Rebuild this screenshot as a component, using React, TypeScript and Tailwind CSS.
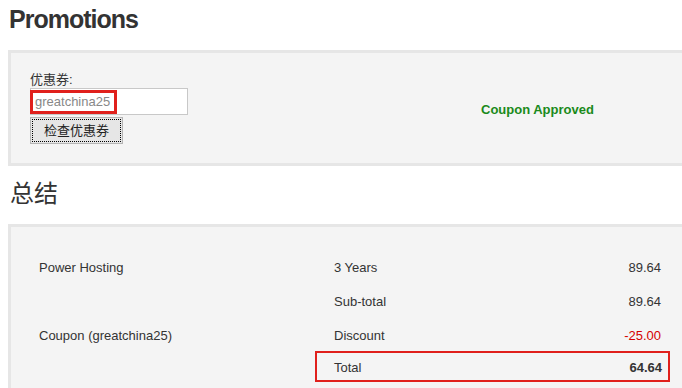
export default function App() {
  const rows = [
    { item: "Power Hosting", label: "3 Years", value: "89.64" },
    { item: "", label: "Sub-total", value: "89.64" },
    { item: "Coupon (greatchina25)", label: "Discount", value: "-25.00", red: true },
  ];

  return (
    <div className="w-[682px] h-[388px] overflow-hidden bg-white pl-2 text-[#333]" style={{ fontFamily: '"Liberation Sans", "Noto Sans CJK SC", sans-serif' }}>
      {/* Promotions */}
      <h1 className="pt-[3px] pl-[1px] text-[25px] font-bold leading-[32px] tracking-[-1px] text-[#333]">Promotions</h1>

      <div className="mt-[15px] w-[700px] h-[116px] border-[3px] border-[#e6e6e6] bg-[#f4f4f4] flex">
        <div className="w-[451px] pl-[19px] pt-[20px] shrink-0">
          <label className="block text-[13px] leading-[14px] text-[#333]">优惠券:</label>
          <div className="relative mt-[1px] w-[158px] h-[27px] bg-white border border-[#c8c8c8]">
            <span className="absolute left-[-1px] top-[1px] h-[24px] w-[87px] border-[3px] border-[#e0201c] pl-[2px] text-[13px] leading-[18px] text-[#888]">greatchina25</span>
          </div>
          <button className="mt-[2px] w-[93px] h-[27px] bg-[#e6e6e6] border border-[#b5b5b5] outline outline-1 outline-dotted outline-black -outline-offset-[3px] text-[13px] text-[#222]">检查优惠券</button>
        </div>
        <div className="pl-[19px] pt-[47px] text-[13px] font-bold text-[#1a8a1a]">Coupon Approved</div>
      </div>

      {/* Summary */}
      <h2 className="mt-[11px] pl-[2px] text-[24px] leading-[30px] text-[#333]" style={{ fontFamily: '"Noto Sans CJK SC", sans-serif' }}>总结</h2>

      <div className="mt-[17px] w-[700px] h-[200px] border-t-[3px] border-l-[3px] border-[#e6e6e6] bg-[#f4f4f4] pl-[28px] pt-[24px] text-[13px]">
        {rows.map((r, i) => (
          <div key={i} className="flex h-[34px] items-center">
            <div className="w-[276px]">{r.item}</div>
            <div className="w-[354px] flex justify-between pl-[19px] pr-[8px]">
              <span>{r.label}</span>
              <span className={r.red ? "text-[#d40000]" : ""}>{r.value}</span>
            </div>
          </div>
        ))}
        <div className="flex h-[34px]">
          <div className="w-[276px]" />
          <div className="-mt-[2px] w-[355px] h-[31px] border-2 border-[#e0201c] flex items-end justify-between pl-[17px] pr-[6px] pb-[3px]">
            <span>Total</span>
            <span className="font-bold">64.64</span>
          </div>
        </div>
      </div>
    </div>
  );
}
